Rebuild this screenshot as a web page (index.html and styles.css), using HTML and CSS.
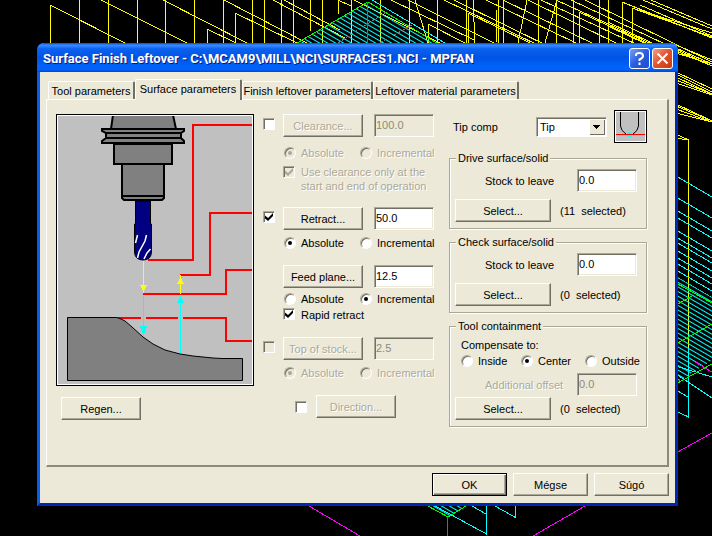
FILE: index.html
```html
<!DOCTYPE html>
<html lang="en">
<head>
    <meta charset="UTF-8">
    <meta name="viewport" content="width=device-width, initial-scale=1.0">
    <title>Surface Finish Leftover</title>
    <link rel="stylesheet" href="styles.css">
</head>
<body>
    <!-- toolpath viewport behind the dialog -->
    <svg class="viewport" viewBox="0 0 712 536" preserveAspectRatio="xMidYMid slice" fill="none" shape-rendering="crispEdges" aria-hidden="true">
        <defs>
            <pattern id="hatch" width="40" height="4" patternUnits="userSpaceOnUse" patternTransform="rotate(30)">
                <path d="M0 1H40" stroke="#0ff" stroke-width="1"/>
            </pattern>
        </defs>
        <g stroke="#ff0">
            <path d="M50.5 5V43M79.5 0V43M108.5 0V43M137.5 0V43M165.5 0V43M194.5 0V43M207.5 29V43M223.5 0V43M235.5 13V43M252.5 0V43M264.5 0V43M281.5 0V43M293.5 0V43M310.5 0V31M322.5 0V43M338.5 0V14M351.5 0V43"/>
            <path d="M380.5 0V43M409.5 0V43M428.5 24V43M437.5 0V43M466.5 0V43M468.5 13V43M498.5 0V43M503.5 0V43M538.5 0V43M556.5 0V43M573.5 0V43M579.5 12V43M599.5 0V43M608.5 0V43M622.5 2V43M632.5 8V43"/>
            <path d="M50 5L125 43M101 0L187 43M163 0L247 43M207 29L236 43M224 0L307 43M235 13L297 43M273 0L345 38M284 0L340 30M338 0L351 6M354 0L440 43"/>
            <path d="M391 0L474 40M408 0L500 46M428 24L465 43M444 0L540 46M454 0L556 50M468 13L530 43M486 0L576 43M503 0L598 46M528 0L622 46M541 0L640 46M556 0L656 46M579 12L646 43M608 26L644 43M608 22L652 43M415 0L428 43M473 0L475 43M527 0L518 43M557 0L545 43M497 10L496 43"/>
            <path d="M571 0L712 66M585 0L712 62M622 2L712 38M632 8L712 37M632 8L712 33M640 5L712 36M643 0L712 29M651 0L712 26"/>
            <path d="M676 45L712 60M676 48L712 64M676 51L712 66M676 53L712 64M676 72L712 89M676 74L712 92M676 77L712 94M676 80L712 94M676 83L712 95M676 104L712 121M676 106L712 121M676 109L712 122M676 113L712 122M676 134L688.5 140M676 138L688.5 140V348"/>
        </g>
        <path d="M299 43L368 2L437 43Z" fill="url(#hatch)"/>
        <path d="M372 0L445 43" stroke="#0ff"/>
        <path d="M297 43L368 2L437 43" stroke="#0f0"/>
        <path d="M367.5 2V43" stroke="#f0f"/>
        <path d="M338 43L386 12M380 43L412 25" stroke="#777" stroke-dasharray="3 2"/>
        <g stroke="#0ff">
            <path d="M676 176L712 197M676 197L712 218M676 210L712 231M676 217L712 238M676 230L712 251M676 237L712 258M676 242L712 263M676 250L712 271M676 257L712 278M676 263L712 284M676 270L712 291"/>
            <path d="M688.5 348V417L676 411M676 390L688 397M676 374L712 398M676 366L712 377"/>
            <path d="M435 506L486.5 534V506M472 506L486 514M495 506L515.5 517.5V506"/>
        </g>
        <path d="M676 276L712 297V360L676 383Z" fill="url(#hatch)"/>
        <path d="M432 506L448 517L466 506Z" fill="url(#hatch)"/>
        <path d="M676 283L712 303M676 305L694 295M676 344L712 324M676 384L712 364M428 506L448 517L466 506" stroke="#0f0"/>
        <path d="M676 453L712 433M695 362L712 372M309 506L360 536M533 536L585 506M447.5 517V536" stroke="#f0f"/>
    </svg>

    <main class="dialog">
        <header class="titlebar">
            <h1>Surface Finish Leftover - C:\MCAM9\MILL\NCI\SURFACES1.NCI - MPFAN</h1>
            <button type="button" class="caption-btn" aria-label="Help">
                <svg viewBox="0 0 19 19" fill="none" stroke="#fff" stroke-width="2"><path d="M6 7V6Q6 4 9.500 4T13 7Q13 9 9.500 10.500V12M9.500 13.500V16"/></svg>
            </button>
            <button type="button" class="caption-btn close" aria-label="Close">
                <svg viewBox="0 0 19 19" fill="none" stroke="#fff" stroke-width="2"><path d="M4.500 4.500L14.500 14.500M14.500 4.500L4.500 14.500"/></svg>
            </button>
        </header>

        <div class="tabs" role="tablist">
            <button type="button" class="tab" role="tab">Tool parameters</button>
            <button type="button" class="tab active" role="tab" aria-selected="true">Surface parameters</button>
            <button type="button" class="tab" role="tab">Finish leftover parameters</button>
            <button type="button" class="tab" role="tab">Leftover material parameters</button>
        </div>

        <form class="page">
            <section class="preview">
                <svg class="diagram" viewBox="58 116 194 268" fill="none" role="img" aria-label="Tool heights">
                    <!-- tool height levels -->
                    <path d="M148 260H193V125H252M180 275H210V213H252M143 294H226V270H252M116 318H141M146 318H178M183 318H226V341H252" stroke="#f00" stroke-width="2"/>
                    <!-- holder -->
                    <g fill="#808080" stroke="#000" stroke-width="2">
                        <path d="M113 115L111 129H176L173 115Z"/>
                        <path d="M102 129H184V131L181 133V138L184 141V143H102V141L106 138V133L102 131Z"/>
                        <path d="M106 133H181M106 138H181"/>
                        <path d="M114 144H172V164H114Z"/>
                        <path d="M122 164H164V198L162 200H124L122 198ZM122 196H164"/>
                    </g>
                    <!-- ball end mill -->
                    <path d="M135.500 201H150.500V224H151.500V252Q151 260 143 260T134.500 252V224H135.500Z" fill="#000080" stroke="#000"/>
                    <path d="M137.500 235L135.500 243M146.500 235L145 241L139 252L137.500 258M150.500 249L147 253L144 259" stroke="#fff" stroke-width="1.500"/>
                    <!-- stock -->
                    <path d="M67.500 317.500H116.500L120 318.500L125 321L132 327L143 337L153 344L165 350L180 354L193 356L213 358L222 358.500H242.500V380.500H67.500Z" fill="#808080" stroke="#000"/>
                    <g shape-rendering="crispEdges">
                        <path d="M143.500 261V293M180.500 294V275" stroke="#ff0"/>
                        <path d="M140 285H147L143.500 292ZM177 284H184L180.500 277Z" fill="#ff0"/>
                        <path d="M143.500 295V336M180.500 353V295" stroke="#0ff"/>
                        <path d="M140 326H147L145 333H142ZM177 303H184L180.500 296Z" fill="#0ff"/>
                    </g>
                </svg>
                <button type="button" class="btn regen">Regen...</button>
            </section>

            <section class="levels">
                <div class="level clearance">
                    <div class="level-row">
                        <input type="checkbox" aria-label="Use clearance">
                        <button type="button" class="btn" disabled>Clearance...</button>
                        <input type="text" value="100.0" aria-label="Clearance" disabled>
                    </div>
                    <div class="modes">
                        <label><input type="radio" name="clearance" checked disabled>Absolute</label>
                        <label><input type="radio" name="clearance" disabled>Incremental</label>
                    </div>
                    <label class="option"><input type="checkbox" checked disabled><span>Use clearance only at the<br>start and end of operation</span></label>
                </div>
                <div class="level">
                    <div class="level-row">
                        <input type="checkbox" aria-label="Use retract" checked>
                        <button type="button" class="btn">Retract...</button>
                        <input type="text" value="50.0" aria-label="Retract">
                    </div>
                    <div class="modes">
                        <label><input type="radio" name="retract" checked>Absolute</label>
                        <label><input type="radio" name="retract">Incremental</label>
                    </div>
                </div>
                <div class="level feed">
                    <div class="level-row">
                        <button type="button" class="btn">Feed plane...</button>
                        <input type="text" value="12.5" aria-label="Feed plane">
                    </div>
                    <div>
                        <div class="modes">
                            <label><input type="radio" name="feed">Absolute</label>
                            <label><input type="radio" name="feed" checked>Incremental</label>
                        </div>
                        <label class="option"><input type="checkbox" checked>Rapid retract</label>
                    </div>
                </div>
                <div class="level">
                    <div class="level-row">
                        <input type="checkbox" aria-label="Use top of stock" disabled>
                        <button type="button" class="btn" disabled>Top of stock...</button>
                        <input type="text" value="2.5" aria-label="Top of stock" disabled>
                    </div>
                    <div class="modes">
                        <label><input type="radio" name="stock" checked disabled>Absolute</label>
                        <label><input type="radio" name="stock" disabled>Incremental</label>
                    </div>
                </div>
                <div class="direction">
                    <input type="checkbox" aria-label="Use direction">
                    <button type="button" class="btn" disabled>Direction...</button>
                </div>
            </section>

            <section class="surfaces">
                <div class="tip">
                    <label for="tipComp">Tip comp</label>
                    <span class="select">
                        <select id="tipComp">
                            <option>Tip</option>
                            <option>Center</option>
                        </select>
                        <svg class="arrow" viewBox="0 0 16 16" shape-rendering="crispEdges" aria-hidden="true"><path d="M4 6H11V7H10V8H9V9H8V10H7V9H6V8H5V7H4Z"/></svg>
                    </span>
                    <svg class="tip-icon" viewBox="0 0 29 29" fill="none" aria-hidden="true">
                        <circle cx="13.500" cy="22.500" r="2.500" fill="#0ff"/>
                        <path d="M4.500 0V14Q5 19 10 22M22.500 0V14Q22 19 17 22" stroke="#000"/>
                        <path d="M0 22.500H29" stroke="#f00"/>
                    </svg>
                </div>

                <fieldset>
                    <legend>Drive surface/solid</legend>
                    <div class="stock">
                        <label for="driveStock">Stock to leave</label>
                        <input type="text" id="driveStock" value="0.0">
                    </div>
                    <div class="pick">
                        <button type="button" class="btn">Select...</button>
                        <span>(11&nbsp; selected)</span>
                    </div>
                </fieldset>

                <fieldset>
                    <legend>Check surface/solid</legend>
                    <div class="stock">
                        <label for="checkStock">Stock to leave</label>
                        <input type="text" id="checkStock" value="0.0">
                    </div>
                    <div class="pick">
                        <button type="button" class="btn">Select...</button>
                        <span>(0&nbsp; selected)</span>
                    </div>
                </fieldset>

                <fieldset class="containment">
                    <legend>Tool containment</legend>
                    <div class="compensate">
                        <p>Compensate to:</p>
                        <div class="sides">
                            <label><input type="radio" name="side">Inside</label>
                            <label><input type="radio" name="side" checked>Center</label>
                            <label><input type="radio" name="side">Outside</label>
                        </div>
                    </div>
                    <div class="stock">
                        <label for="offset" class="off">Additional offset</label>
                        <input type="text" id="offset" value="0.0" disabled>
                    </div>
                    <div class="pick">
                        <button type="button" class="btn">Select...</button>
                        <span>(0&nbsp; selected)</span>
                    </div>
                </fieldset>
            </section>
        </form>

        <footer class="actions">
            <button type="button" class="btn default">OK</button>
            <button type="button" class="btn">Mégse</button>
            <button type="button" class="btn">Súgó</button>
        </footer>
    </main>
</body>
</html>
```

FILE: styles.css
```css
* { margin: 0; padding: 0; box-sizing: border-box; }
body {
    min-height: 100vh;
    padding: 43px 34px 30px 37px;
    background: #000;
    color: #000;
    font: 11px/16px "Liberation Sans", Arial, sans-serif;
    display: flex;
}
button, input, select { font: inherit; color: inherit; }
.viewport {
    position: absolute;
    inset: 0;
    width: 100%;
    height: 100%;
}

/* window frame */
.dialog {
    position: relative;
    flex: 1;
    display: flex;
    flex-direction: column;
    background: #ece9d8;
    border: 3px solid #0046e0;
    border-top: 0;
    border-color: #0046e0 #0027b4 #0027b4 #0a5cf0;
    border-radius: 7px 7px 0 0;
}
.titlebar {
    display: flex;
    align-items: center;
    gap: 2px;
    height: 29px;
    margin: 0 -3px;
    padding: 2px 5px 0 6px;
    border-radius: 7px 7px 0 0;
    background: linear-gradient(#0a4ad8, #3a8cff 8%, #0b62f0 20%, #0053e4 50%, #0062fb 80%, #0062fb 92%, #0044d0);
}
.titlebar h1 {
    flex: 1;
    color: #fff;
    font: 700 13px/16px Roboto, "Liberation Sans", sans-serif;
    white-space: nowrap;
    text-shadow: 1px 1px #0a1883;
}
.caption-btn {
    width: 21px;
    height: 21px;
    border: 1px solid #fff;
    border-radius: 3px;
    background: linear-gradient(135deg, #7ba2f5, #2a5ce0 50%, #1c4cd4);
}
.caption-btn.close { background: linear-gradient(135deg, #f0a088, #e2512c 50%, #c8390f); }
.caption-btn svg { display: block; width: 19px; height: 19px; }

/* tabs */
.tabs {
    display: grid;
    grid-template-columns: 87px 107px 131px 146px;
    align-items: end;
    padding: 7px 8px 0;
}
.tab {
    height: 18px;
    line-height: 16px;
    white-space: nowrap;
    background: #ece9d8;
    border: 1px solid #fff;
    border-right: 2px solid #716f64;
    border-bottom: 0;
    border-radius: 2px 2px 0 0;
}
.tab.active {
    position: relative;
    height: 21px;
    margin-bottom: -1px;
    padding-bottom: 2px;
}
.page {
    flex: 1;
    display: grid;
    grid-template-columns: 198px 177px minmax(0, 1fr);
    column-gap: 9px;
    margin: 0 6px;
    padding: 14px 20px 14px 9px;
    border: 1px solid #fff;
    border-right: 2px solid #8d8a7c;
    border-bottom: 2px solid #8d8a7c;
}

/* controls */
.btn {
    width: 80px;
    height: 23px;
    background: #ece9d8;
    border: 1px solid;
    border-color: #fff #716f64 #716f64 #fff;
    box-shadow: inset -1px -1px #aca899;
}
.btn.default { border-color: #000; box-shadow: inset 1px 1px #fff, inset -1px -1px #716f64, inset -2px -2px #aca899; }
.btn:disabled, label:has(:disabled), .off { color: #aca899; text-shadow: 1px 1px #fff; }
input[type="text"] {
    width: 60px;
    height: 23px;
    padding: 0 2px 2px 1px;
    background: #fff;
    border: 1px solid;
    border-color: #aca899 #fff #fff #aca899;
    box-shadow: inset 1px 1px #716f64, inset -1px -1px #ece9d8;
    outline: none;
}
input[type="text"]:disabled { color: #8d8a7c; background: #ece9d8; }
input[type="checkbox"], input[type="radio"] {
    appearance: none;
    flex: none;
    display: grid;
    place-items: center;
    width: 12px;
    height: 12px;
    background: #fff;
    border: 1px solid;
    border-color: #aca899 #fff #fff #aca899;
    box-shadow: inset 1px 1px #716f64;
}
input[type="radio"] { border-radius: 50%; }
input[type="checkbox"]:disabled, input[type="radio"]:disabled { background: #ece9d8; color: #aca899; }
input[type="checkbox"]:checked::before {
    content: "";
    width: 8px;
    height: 8px;
    background: currentColor;
    clip-path: polygon(0 30%, 38% 62%, 100% 0, 100% 38%, 38% 100%, 0 68%);
}
input[type="radio"]:checked::before {
    content: "";
    width: 4px;
    height: 4px;
    border-radius: 50%;
    background: currentColor;
}
label { white-space: nowrap; }

/* tool picture */
.diagram {
    display: block;
    width: 198px;
    height: 272px;
    padding: 1px;
    border: 1px solid #000;
    background: #c0c0c0;
    box-shadow: inset 0 0 0 1px #fff;
}
.regen { margin: 11px 5px 0; }

/* height levels */
.levels { display: flex; flex-direction: column; gap: 14px; }
.level { display: flex; flex-direction: column; gap: 5px; }
.level.clearance { gap: 4px; }
.level.clearance .modes { margin-top: 4px; }
.level.feed { gap: 3px; }
.level-row {
    display: grid;
    grid-template-columns: 20px 91px 60px;
}
.level-row > [type="checkbox"] { margin-top: 4px; }
.level-row .btn { grid-column: 2; }
.modes {
    display: grid;
    grid-template-columns: 76px 76px;
    padding-left: 21px;
}
.modes label, .sides label { display: flex; align-items: center; gap: 5px; }
.option { display: flex; gap: 6px; padding-left: 20px; }
.option input { margin-top: 1px; }
.option span { line-height: 14px; }
.direction { display: flex; align-items: center; gap: 9px; padding-left: 32px; }

/* right column */
.surfaces { display: flex; flex-direction: column; gap: 6px; }
.tip {
    display: flex;
    align-items: center;
    height: 33px;
    margin: -4px 0 2px;
    padding-left: 4px;
}
.tip label { flex: 1; }
.select { position: relative; width: 71px; margin-right: 7px; }
.select select {
    appearance: none;
    display: block;
    width: 100%;
    height: 20px;
    padding-left: 3px;
    background: #fff;
    border: 1px solid;
    border-color: #aca899 #fff #fff #aca899;
    box-shadow: inset 1px 1px #716f64;
    outline: none;
}
.arrow {
    position: absolute;
    top: 2px;
    right: 2px;
    width: 16px;
    height: 16px;
    background: #ece9d8;
    box-shadow: inset 1px 1px #fff, inset -1px -1px #716f64;
    pointer-events: none;
}
.tip-icon {
    width: 33px;
    height: 33px;
    padding: 1px;
    border: 1px solid #000;
    background: #c0c0c0;
    box-shadow: inset 0 0 0 1px #fff;
}
fieldset {
    display: flex;
    flex-direction: column;
    gap: 7px;
    min-width: 0;
    padding: 4px 9px 6px 5px;
    border: 1px solid #aca899;
    box-shadow: 1px 1px #fff, inset 1px 1px #fff;
}
legend {
    margin-left: 1px;
    padding: 0 2px;
    line-height: 14px;
    background: #ece9d8;
}
.stock { display: flex; align-items: center; justify-content: space-between; padding-left: 30px; }
.pick { display: flex; align-items: center; gap: 9px; }
.pick .btn { width: 96px; }
.containment { gap: 1px; }
.compensate { padding: 0 0 3px 6px; }
.sides { display: grid; grid-template-columns: 60px 64px minmax(0, 1fr); }

.actions {
    display: flex;
    justify-content: flex-end;
    gap: 6px;
    padding: 6px 6px 7px;
}
.actions .btn { width: 75px; }
```
